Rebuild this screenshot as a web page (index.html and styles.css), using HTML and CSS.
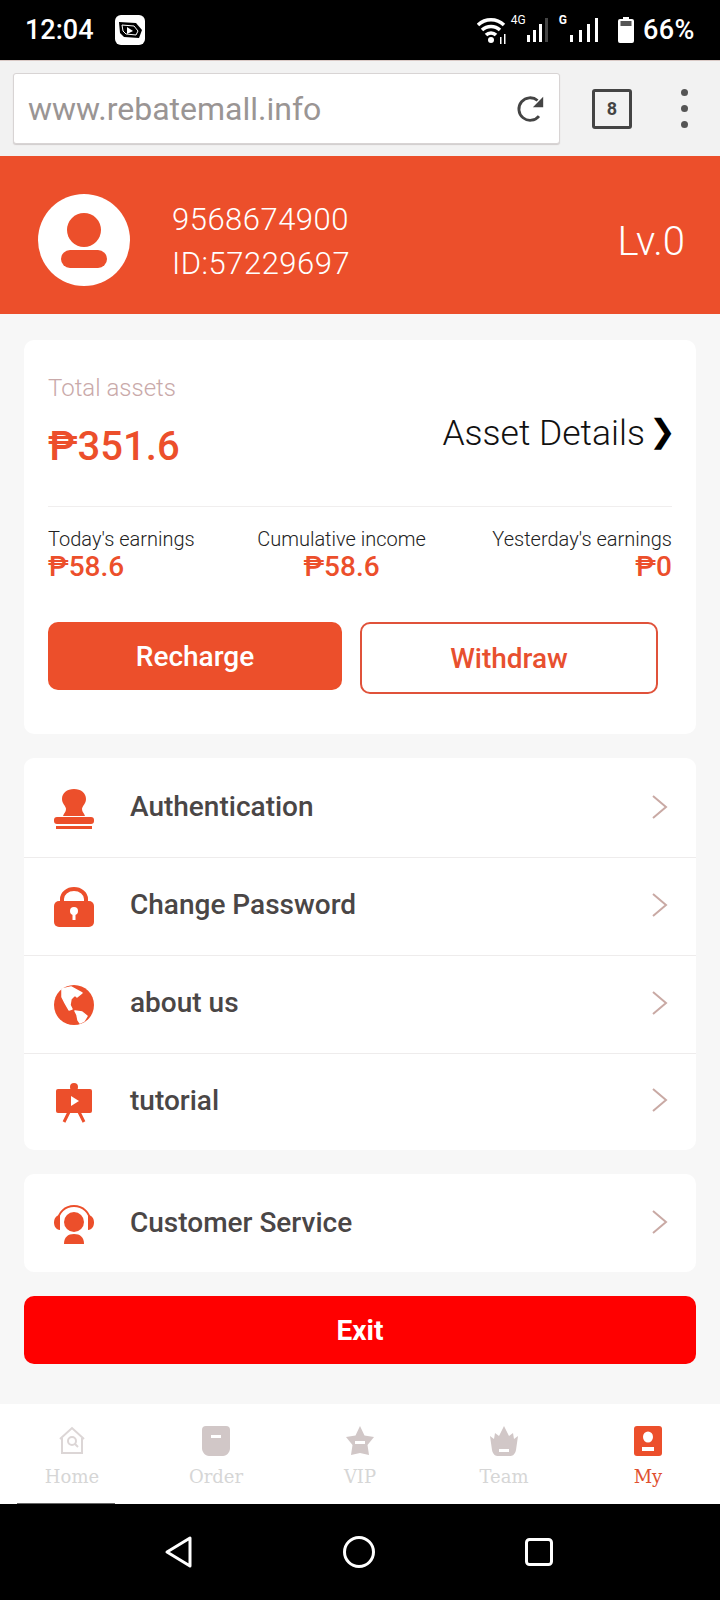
FILE: index.html
```html
<!DOCTYPE html>
<html lang="en">
<head>
    <meta charset="UTF-8">
    <meta name="viewport" content="width=device-width, initial-scale=1.0">
    <title>My</title>
    <link rel="stylesheet" href="styles.css">
</head>
<body>
    <div class="status-bar">
        <span class="clock">12:04</span>
        <svg class="app-icon" viewBox="0 0 30 30" width="30" height="30">
            <rect width="30" height="30" rx="6" fill="#fff"/>
            <path d="M4 7l17 1 6 7-3 8-15-1-4-4z" fill="#000"/>
            <path d="M7 10l12 1 4 5-2 4-10-1-3-3z" fill="none" stroke="#fff" stroke-width="1"/>
            <path d="M12 12l6 4-6 3z" fill="#fff"/>
        </svg>
        <div class="status-right">
            <svg viewBox="0 0 30 28" width="30" height="28">
                <path d="M1 9a19 19 0 0 1 26 0M5 14a13 13 0 0 1 18 0M9 19a7 7 0 0 1 10 0" fill="none" stroke="#fff" stroke-width="3.500"/>
                <circle cx="14" cy="24" r="3" fill="#fff"/>
                <path d="M23 21h1.500v7H23zM27 18h1.500v10H27z" fill="#fff"/>
            </svg>
            <span class="net net-4g">4G</span>
            <svg class="bars" viewBox="0 0 22 24" width="22" height="24">
                <path d="M0 17h3v7H0zM6 12h3v12H6zM12 6h3v18h-3z" fill="#fff"/>
                <path d="M18 0h3v24h-3z" fill="#444"/>
            </svg>
            <span class="net net-g">G</span>
            <svg class="bars" viewBox="0 0 29 24" width="29" height="24">
                <path d="M0 17h3v7H0zM9 12h3v12H9zM17 6h3v18h-3zM25 0h3v24h-3z" fill="#fff"/>
            </svg>
            <svg class="battery" viewBox="0 0 16 26" width="16" height="26">
                <path d="M5 0h6v2h3a2 2 0 0 1 2 2v20a2 2 0 0 1-2 2H2a2 2 0 0 1-2-2V4a2 2 0 0 1 2-2h3z" fill="#fff"/>
                <rect x="2.500" y="4" width="11" height="5" fill="#555"/>
            </svg>
            <span class="percent">66%</span>
        </div>
    </div>

    <div class="browser-bar">
        <div class="url-box">
            <span class="url">www.rebatemall.info</span>
            <svg viewBox="0 0 32 32" width="30" height="30">
                <path d="M24.500 23.500A12 12 0 1 1 23 7" fill="none" stroke="#444" stroke-width="3"/>
                <path d="M29 3v11H18z" fill="#444"/>
            </svg>
        </div>
        <div class="tab-count">8</div>
        <div class="menu-dots"><i></i><i></i><i></i></div>
    </div>

    <main class="page">
        <header class="profile">
            <svg class="avatar" viewBox="0 0 92 92" width="92" height="92">
                <circle cx="46" cy="46" r="46" fill="#fff"/>
                <ellipse cx="46" cy="36" rx="17" ry="17" fill="#ec4f2b"/>
                <rect x="23" y="56" width="46" height="18" rx="9" fill="#ec4f2b"/>
            </svg>
            <div class="profile-text">
                <div>9568674900</div>
                <div>ID:57229697</div>
            </div>
            <div class="level">Lv.0</div>
        </header>

        <section class="card assets">
            <div class="assets-top">
                <div>
                    <div class="assets-label">Total assets</div>
                    <div class="assets-total">₱351.6</div>
                </div>
                <div class="assets-link">Asset Details<span>❯</span></div>
            </div>
            <div class="earnings">
                <div class="earning">
                    <div class="earning-label">Today's earnings</div>
                    <div class="earning-value">₱58.6</div>
                </div>
                <div class="earning earning-mid">
                    <div class="earning-label">Cumulative income</div>
                    <div class="earning-value">₱58.6</div>
                </div>
                <div class="earning earning-end">
                    <div class="earning-label">Yesterday's earnings</div>
                    <div class="earning-value">₱0</div>
                </div>
            </div>
            <div class="asset-buttons">
                <button class="btn btn-fill" type="button">Recharge</button>
                <button class="btn btn-line" type="button">Withdraw</button>
            </div>
        </section>

        <section class="card menu">
            <div class="menu-row menu-row-top">
                <svg class="menu-icon" viewBox="0 0 40 40">
                    <path d="M20 0c7 0 12 4 12 10 0 5-4 7-4 10 0 3 2 4 3 7H9c1-3 3-4 3-7 0-3-4-5-4-10C8 4 13 0 20 0z" fill="#ec4f2b"/>
                    <rect y="28" width="40" height="7" rx="3" fill="#ec4f2b"/>
                    <rect x="2" y="37" width="36" height="3" fill="#ec4f2b"/>
                </svg>
                <span class="menu-text">Authentication</span>
                <svg class="chevron" viewBox="0 0 18 26"><path d="M2 2l13 11L2 24" fill="none" stroke="#c9a9a4" stroke-width="2"/></svg>
            </div>
            <div class="menu-row">
                <svg class="menu-icon" viewBox="0 0 40 40">
                    <path d="M8 16V12a12 10 0 0 1 24 0v4" fill="none" stroke="#ec4f2b" stroke-width="4"/>
                    <rect y="14" width="40" height="26" rx="5" fill="#ec4f2b"/>
                    <circle cx="20" cy="24" r="4" fill="#fff"/>
                    <rect x="18.500" y="25" width="3" height="8" fill="#fff"/>
                </svg>
                <span class="menu-text">Change Password</span>
                <svg class="chevron" viewBox="0 0 18 26"><path d="M2 2l13 11L2 24" fill="none" stroke="#c9a9a4" stroke-width="2"/></svg>
            </div>
            <div class="menu-row">
                <svg class="menu-icon" viewBox="0 0 40 40">
                    <circle cx="20" cy="20" r="20" fill="#ec4f2b"/>
                    <g fill="#fff" stroke="#fff" stroke-width="1.500" stroke-linejoin="round">
                        <path d="M8 4l9-2 11 6-5 4-2-2-4 4-1 6 2 4-3 1-4-7-3-6z"/>
                        <path d="M21 26l7 1 5 4-3 5-4 2-2-3-1-5z"/>
                    </g>
                </svg>
                <span class="menu-text">about us</span>
                <svg class="chevron" viewBox="0 0 18 26"><path d="M2 2l13 11L2 24" fill="none" stroke="#c9a9a4" stroke-width="2"/></svg>
            </div>
            <div class="menu-row menu-row-end">
                <svg class="menu-icon" viewBox="0 0 40 40">
                    <circle cx="20" cy="4" r="4" fill="#ec4f2b"/>
                    <rect x="2" y="6" width="36" height="24" rx="2" fill="#ec4f2b"/>
                    <path d="M15 29l-5 10M25 29l5 10" stroke="#ec4f2b" stroke-width="3" fill="none"/>
                    <path d="M17 13l8 5-8 5z" fill="#fff"/>
                </svg>
                <span class="menu-text">tutorial</span>
                <svg class="chevron" viewBox="0 0 18 26"><path d="M2 2l13 11L2 24" fill="none" stroke="#c9a9a4" stroke-width="2"/></svg>
            </div>
        </section>

        <section class="card menu">
            <div class="menu-row menu-row-solo">
                <svg class="menu-icon" viewBox="0 0 40 40">
                    <path d="M4 16a16 15 0 0 1 32 0" fill="none" stroke="#ec4f2b" stroke-width="2"/>
                    <path d="M6 10v15C2 25 0 21 0 17.500S2 10 6 10zM34 10v15c4 0 6-4 6-7.500S38 10 34 10z" fill="#ec4f2b"/>
                    <circle cx="20" cy="17" r="10" fill="#ec4f2b"/>
                    <path d="M10 39c0-7 4-10 10-10s10 3 10 10z" fill="#ec4f2b"/>
                </svg>
                <span class="menu-text">Customer Service</span>
                <svg class="chevron" viewBox="0 0 18 26"><path d="M2 2l13 11L2 24" fill="none" stroke="#c9a9a4" stroke-width="2"/></svg>
            </div>
        </section>

        <button class="exit-btn" type="button">Exit</button>
    </main>

    <nav class="tabbar">
        <div class="tab">
            <svg viewBox="0 0 28 30" width="28" height="30">
                <path d="M2 13L14 2l12 11M4 12v15h20V12" fill="none" stroke="#dcd6d6" stroke-width="2"/>
                <circle cx="14" cy="15" r="4" fill="none" stroke="#dcd6d6" stroke-width="2"/>
                <path d="M17 18l3 3" stroke="#dcd6d6" stroke-width="2"/>
            </svg>
            <span>Home</span>
        </div>
        <div class="tab">
            <svg viewBox="0 0 28 30" width="28" height="30">
                <path d="M4 0h20a4 4 0 0 1 4 4v18c0 4-3 8-7 8H7c-4 0-7-4-7-8V4a4 4 0 0 1 4-4z" fill="#d1c7c7"/>
                <rect x="9" y="9" width="10" height="3" fill="#fff"/>
            </svg>
            <span>Order</span>
        </div>
        <div class="tab">
            <svg viewBox="0 0 28 30" width="28" height="30">
                <path d="M14 0l4.500 9.500L28 11l-6.500 8 1.500 10-9-2-9 2 1.500-10L0 11l9.500-1.500z" fill="#d1c7c7"/>
                <rect x="9" y="15" width="10" height="3" fill="#fff"/>
            </svg>
            <span>VIP</span>
        </div>
        <div class="tab">
            <svg viewBox="0 0 28 30" width="28" height="30">
                <path d="M14 0l5 10 4-3 1 6 4-3-2 14c-1 5-4 6-6 6H8c-2 0-5-1-6-6L0 10l4 3 1-6 4 3z" fill="#d1c7c7"/>
                <rect x="9" y="23" width="10" height="3" fill="#fff"/>
            </svg>
            <span>Team</span>
        </div>
        <div class="tab tab-active">
            <svg viewBox="0 0 28 30" width="28" height="30">
                <rect width="28" height="30" rx="3" fill="#ec4f2b"/>
                <ellipse cx="14" cy="11" rx="5" ry="5.500" fill="#fff"/>
                <rect x="8" y="21" width="12" height="4" fill="#fff"/>
            </svg>
            <span>My</span>
        </div>
    </nav>

    <div class="system-nav">
        <svg viewBox="0 0 30 34" width="30" height="34"><path d="M26 3v28L3 17z" fill="none" stroke="#fff" stroke-width="3" stroke-linejoin="round"/></svg>
        <svg viewBox="0 0 34 34" width="34" height="34"><circle cx="17" cy="17" r="14.500" fill="none" stroke="#fff" stroke-width="3"/></svg>
        <svg viewBox="0 0 30 30" width="30" height="30"><rect x="2.500" y="2.500" width="25" height="25" rx="3" fill="none" stroke="#fff" stroke-width="3"/></svg>
    </div>
</body>
</html>
```

FILE: styles.css
```css
* {
    box-sizing: border-box;
}
body {
    margin: 0;
    width: 720px;
    height: 1600px;
    display: flex;
    flex-direction: column;
    overflow: hidden;
    font-family: Roboto, "Liberation Sans", sans-serif;
    background-color: #f7f7f7;
}

.status-bar {
    height: 60px;
    background-color: #000;
    color: #fff;
    display: flex;
    align-items: center;
    padding: 0 25px;
}
.clock {
    font-size: 27px;
    font-weight: 500;
    margin-right: 21px;
}
.status-right {
    margin-left: auto;
    display: flex;
    align-items: center;
}
.net {
    font-size: 12px;
    line-height: 12px;
    align-self: flex-start;
}
.net-4g {
    margin-left: 4px;
    margin-right: 1px;
}
.net-g {
    font-weight: 700;
    margin-left: 10px;
    margin-right: 3px;
}
.battery {
    margin-left: 19px;
}
.percent {
    font-size: 27px;
    font-weight: 500;
    margin-left: 9px;
    letter-spacing: 0.5px;
}

.browser-bar {
    height: 96px;
    background-color: #f2f2f2;
    border-top: 1px solid #d9c9c5;
    display: flex;
    align-items: center;
    padding: 0 32px 0 13px;
}
.url-box {
    width: 547px;
    height: 71px;
    background-color: #fff;
    border: 1px solid #d8d4d4;
    border-radius: 3px;
    box-shadow: 0 1px 1px #d0cccc;
    display: flex;
    align-items: center;
    justify-content: space-between;
    padding: 0 13px 0 14px;
}
.url {
    font-size: 32px;
    color: #9a9594;
}
.tab-count {
    width: 40px;
    height: 40px;
    margin-left: 32px;
    border: 3px solid #444;
    border-radius: 3px;
    display: flex;
    align-items: center;
    justify-content: center;
    font-size: 18px;
    font-weight: 700;
    color: #444;
}
.menu-dots {
    margin-left: auto;
    display: flex;
    flex-direction: column;
    gap: 9px;
}
.menu-dots i {
    display: block;
    width: 7px;
    height: 7px;
    border-radius: 50%;
    background-color: #555;
}

.page {
    flex: 1;
    display: flex;
    flex-direction: column;
    gap: 24px;
}
.profile {
    height: 158px;
    margin-bottom: 2px;
    background-color: #ec4f2b;
    color: #fff;
    display: flex;
    align-items: center;
    padding: 9px 35px 0 38px;
    font-weight: 300;
}
.profile-text {
    margin-left: 42px;
    padding-top: 4px;
    font-size: 31px;
    line-height: 44px;
    letter-spacing: 0.5px;
}
.level {
    margin-left: auto;
    padding-top: 4px;
    font-size: 40px;
}

.card {
    margin: 0 24px;
    background-color: #fff;
    border-radius: 10px;
}
.assets {
    height: 394px;
    padding: 34px 24px 0;
}
.assets-top {
    height: 133px;
    border-bottom: 1px solid #f0eeee;
    display: flex;
    justify-content: space-between;
}
.assets-label {
    font-size: 24px;
    font-weight: 300;
    line-height: 28px;
    color: #c9a9a9;
}
.assets-total {
    margin-top: 21px;
    font-size: 40px;
    font-weight: 500;
    line-height: 48px;
    color: #ec4f2b;
}
.assets-link {
    display: flex;
    align-items: flex-start;
    gap: 4px;
    height: 44px;
    margin-top: 37px;
    margin-right: -4px;
    font-size: 35.5px;
    font-weight: 300;
    line-height: 44px;
    color: #111;
}
.assets-link span {
    margin-top: -2px;
    font-size: 32px;
    color: #000;
}
.earnings {
    margin-top: 19px;
    display: flex;
    justify-content: space-between;
}
.earning-label {
    font-size: 20px;
    font-weight: 300;
    line-height: 26px;
    color: #222;
}
.earning-value {
    font-size: 28px;
    font-weight: 500;
    line-height: 30px;
    color: #ec4f2b;
}
.earning-mid {
    margin-right: 4px;
    text-align: center;
}
.earning-end {
    text-align: right;
}
.asset-buttons {
    margin-top: 40px;
    display: flex;
    align-items: flex-start;
    gap: 18px;
}
.btn {
    font-family: inherit;
    font-size: 28px;
    font-weight: 500;
    border-radius: 10px;
    padding: 0;
}
.btn-fill {
    width: 294px;
    height: 68px;
    border: none;
    background-color: #ec4f2b;
    color: #fff;
}
.btn-line {
    width: 298px;
    height: 72px;
    border: 2px solid #e0523a;
    background-color: #fff;
    color: #e8502f;
}

.menu-row {
    height: 98px;
    display: flex;
    align-items: center;
    padding: 0 27px 4px 30px;
    border-bottom: 1px solid #eeecec;
}
.menu-row-top {
    height: 100px;
    padding-bottom: 2px;
}
.menu-row-end {
    height: 96px;
    border-bottom: none;
}
.menu-row-solo {
    padding-bottom: 2px;
    border-bottom: none;
}
.menu-icon {
    width: 40px;
    height: 40px;
    margin-top: 5px;
}
.menu-text {
    margin-left: 36px;
    font-size: 28px;
    font-weight: 500;
    color: #4a4646;
}
.chevron {
    width: 18px;
    height: 26px;
    margin-left: auto;
}

.exit-btn {
    margin: 0 24px;
    height: 68px;
    border: none;
    border-radius: 10px;
    background-color: #f00;
    color: #fff;
    font-family: inherit;
    font-size: 28px;
    font-weight: 700;
}

.tabbar {
    height: 100px;
    background-color: #fff;
    display: grid;
    grid-template-columns: repeat(5, 1fr);
    padding-top: 22px;
}
.tab {
    display: flex;
    flex-direction: column;
    align-items: center;
    gap: 9px;
    font-family: "DejaVu Serif", serif;
    font-size: 18px;
    line-height: 24px;
    color: #d6d6d6;
}
.tab-active {
    color: #e0502f;
}

.system-nav {
    position: relative;
    height: 96px;
    background-color: #000;
    display: flex;
    align-items: center;
    justify-content: space-between;
    padding: 0 166px 0 164px;
}
.system-nav::before {
    content: "";
    position: absolute;
    left: 17px;
    top: -1px;
    width: 98px;
    height: 1px;
    background-color: #666;
}
```
